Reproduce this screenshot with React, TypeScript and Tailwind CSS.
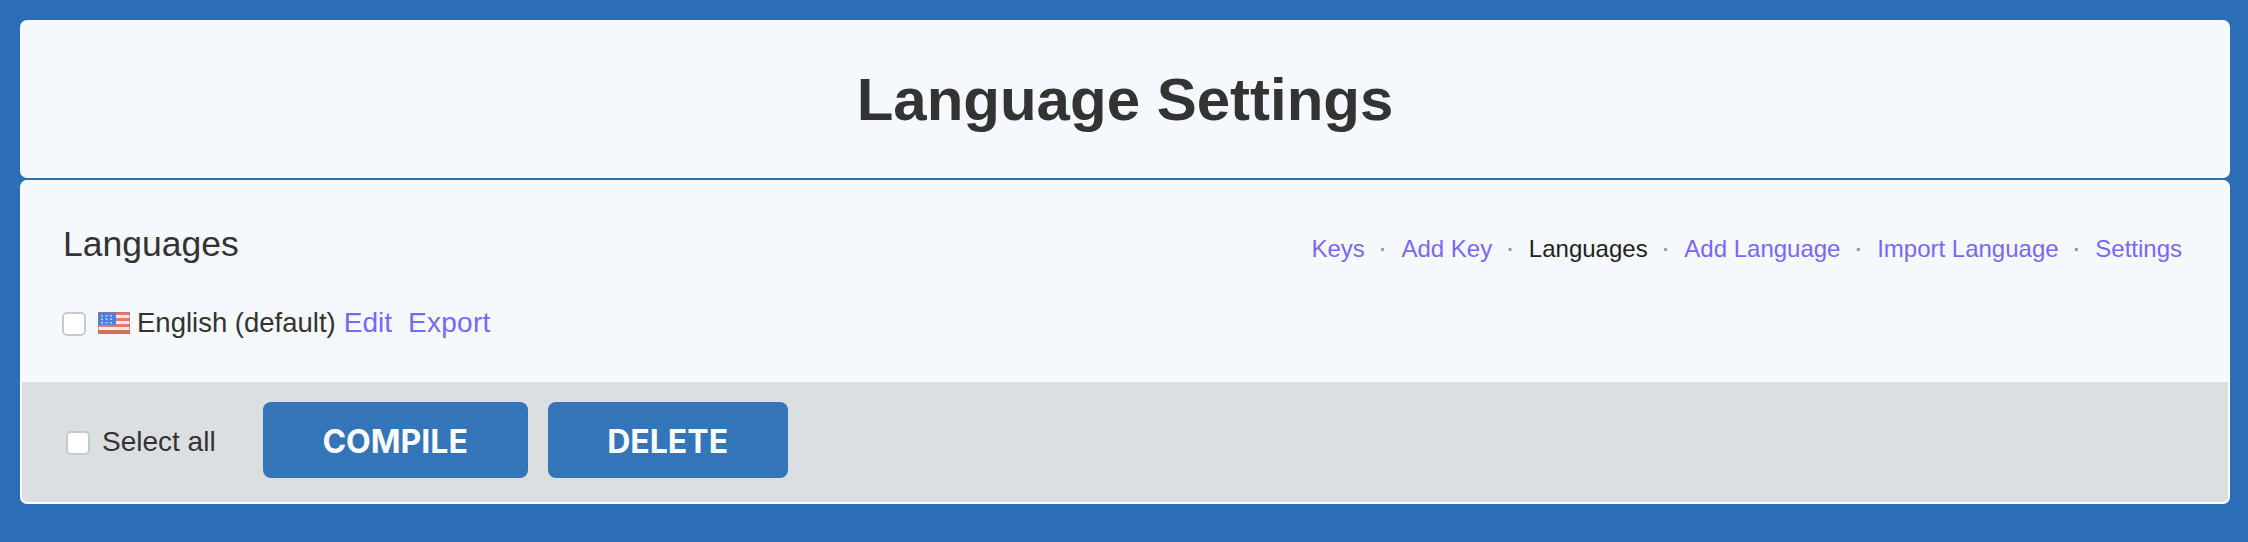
import React from 'react';

const navItems = ['Keys', 'Add Key', 'Languages', 'Add Language', 'Import Language', 'Settings'];

function Flag() {
  return (
    <svg width="32" height="22" viewBox="0 0 32 22" className="shrink-0 blur-[0.5px]">
      <rect width="32" height="22" fill="#f9e8df" />
      <rect y="0" width="32" height="3" fill="#e8776c" />
      <rect y="6" width="32" height="3" fill="#e8776c" />
      <rect y="12" width="32" height="3" fill="#e8776c" />
      <rect y="18" width="32" height="4" fill="#d9705f" />
      <rect width="18" height="13" fill="#4a82e0" />
      {[3, 7.5, 12].map((x) =>
        [3, 6.5, 10].map((y) => <rect key={`${x}-${y}`} x={x} y={y} width="2" height="1.5" fill="#b4cff5" />),
      )}
      <rect x="0.5" y="0.5" width="31" height="21" fill="none" stroke="#a8736a" strokeOpacity="0.6" />
    </svg>
  );
}

function Checkbox({ className }: { className: string }) {
  return (
    <input
      type="checkbox"
      className={`h-[24px] w-[24px] shrink-0 appearance-none rounded-[5px] border-2 border-[#c9c9c9] bg-white ${className}`}
    />
  );
}

export default function App() {
  return (
    <div className="flex h-[542px] flex-col gap-[2px] bg-[#2c6db8] pb-[38px] pl-[20px] pr-[18px] pt-[20px] font-['Liberation_Sans',sans-serif] text-[#333]">
      <header className="flex h-[158px] shrink-0 items-center justify-center rounded-[7px] bg-[#f5f9fe] pt-[2px]">
        <h1 className="text-[60px] font-bold leading-none">Language Settings</h1>
      </header>

      <main className="flex flex-1 flex-col overflow-hidden rounded-[7px] border-b-2 border-l-2 border-r-2 border-white bg-[#f5f9fe]">
        <div className="flex-1 pl-[40px] pr-[46px]">
          <div className="flex items-end justify-between pt-[44px]">
            <h2 className="ml-[1px] text-[35.5px] leading-[40px]">Languages</h2>
            <nav className="flex items-center text-[24px] leading-[30px]">
              {navItems.map((item, i) => (
                <React.Fragment key={item}>
                  {i > 0 && <span className="mx-[15px] text-[20px] font-bold text-[#999]">·</span>}
                  {item === 'Languages' ? (
                    <span className="text-[#222]">{item}</span>
                  ) : (
                    <a className="text-[#7868fa]">{item}</a>
                  )}
                </React.Fragment>
              ))}
            </nav>
          </div>
          <div className="mt-[43px] flex items-center text-[28px] leading-[32px]">
            <Checkbox className="mr-[12px] mt-[2px]" />
            <Flag />
            <span className="ml-[7px] text-[27.5px]">English (default)</span>
            <a className="ml-[8px] text-[#7868fa]">Edit</a>
            <a className="ml-[16px] tracking-[0.3px] text-[#7868fa]">Export</a>
          </div>
        </div>

        <div className="flex h-[120px] shrink-0 items-center bg-[#dcdfe2] pl-[44px]">
          <label className="flex items-center text-[28px] leading-[32px]">
            <Checkbox className="mr-[12px] mt-[2px]" />
            Select all
          </label>
          <button className="mb-[4px] ml-[47px] h-[76px] w-[265px] rounded-[8px] bg-[#3474b9] pt-[4px] font-['Inter',sans-serif] text-[32px] font-bold text-white">
            COMPILE
          </button>
          <button className="mb-[4px] ml-[20px] h-[76px] w-[240px] rounded-[8px] bg-[#3474b9] pt-[4px] font-['Inter',sans-serif] text-[32px] font-bold text-white">
            DELETE
          </button>
        </div>
      </main>
    </div>
  );
}
